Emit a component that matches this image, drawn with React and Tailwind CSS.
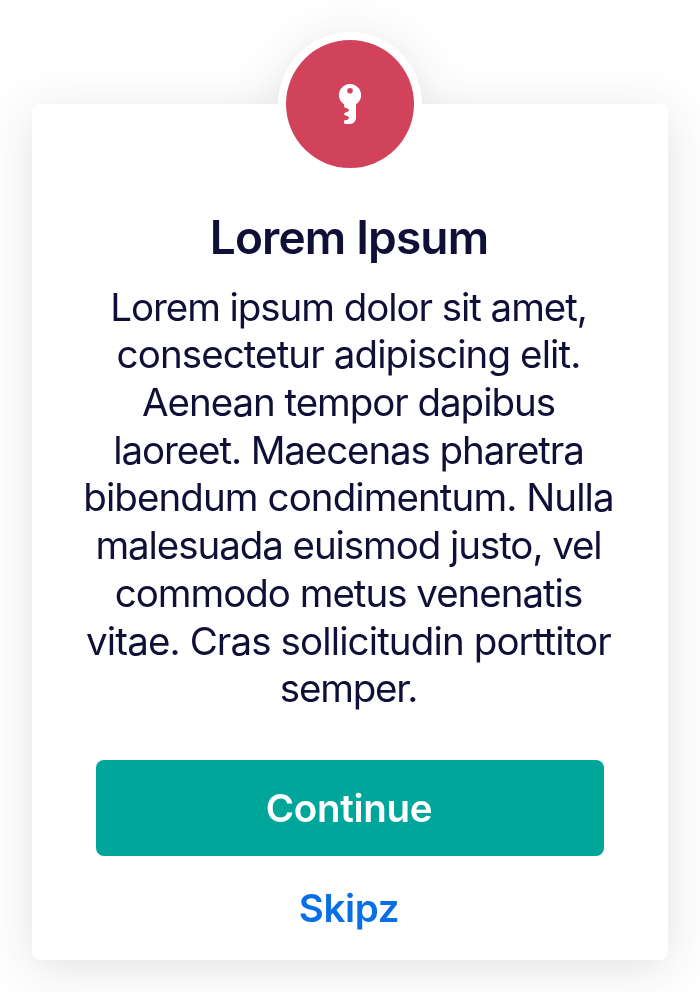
const lines = [
  { text: 'Lorem ipsum dolor sit amet,', tracking: 'tracking-[-1.06px]' },
  { text: 'consectetur adipiscing elit.', tracking: 'tracking-[-0.9px]' },
  { text: 'Aenean tempor dapibus', tracking: 'tracking-[-1.05px]' },
  { text: 'laoreet. Maecenas pharetra', tracking: 'tracking-[-1.1px]' },
  { text: 'bibendum condimentum. Nulla', tracking: 'tracking-[-0.92px]' },
  { text: 'malesuada euismod justo, vel', tracking: 'tracking-[-1.07px]' },
  { text: 'commodo metus venenatis', tracking: 'tracking-[-1.02px]' },
  { text: 'vitae. Cras sollicitudin porttitor', tracking: 'tracking-[-0.88px]' },
  { text: 'semper.', tracking: 'tracking-[-1.2px]' },
];

function KeyIcon() {
  return (
    <svg width="24" height="42" viewBox="0 0 24 42" fill="none">
      <path
        fill="white"
        fillRule="evenodd"
        d="M12 1a11 11 0 0 1 6 20.300V35a6 6 0 0 1-6 6H7.500Q6 41 6 39.500V38.200Q6 37.500 7 37.300L9.500 36.700Q11 36 11 34.800Q11 33.700 9.500 33.300L7.500 32.500Q6 31.800 6 31Q6 30.200 7.500 29.500L9.500 28.700Q11 28.200 11 27Q11 26 9.500 25.500L7.300 24.800Q6 24.200 6 23V21.300A11 11 0 0 1 12 1ZM12 5a2.800 2.800 0 1 0 0 5.600a2.800 2.800 0 0 0 0-5.600Z"
      />
    </svg>
  );
}

export default function App() {
  return (
    <main className="h-[992px] w-[700px] overflow-hidden bg-white px-8 pt-[104px] font-['Inter',sans-serif] text-[#100f37]">
      <section className="flex h-[856px] flex-col items-center rounded-lg bg-white [filter:drop-shadow(0_8px_24px_rgba(20,20,43,0.13))]">
        <div className="-mt-[72px] flex size-36 shrink-0 items-center justify-center rounded-full bg-white">
          <div className="flex size-32 items-center justify-center rounded-full bg-[#d0435b]">
            <KeyIcon />
          </div>
        </div>
        <h1 className="mt-[33px] pr-0.5 text-[46px] leading-[56px] font-semibold tracking-[-0.85px] whitespace-nowrap">Lorem Ipsum</h1>
        <div className="mt-[18.6px] pr-[3px] text-center text-[38.5px] leading-[47.7px] whitespace-nowrap">
          {lines.map(({ text, tracking }) => (
            <p key={text} className={tracking}>{text}</p>
          ))}
        </div>
        <button className="mt-[47.100px] h-24 w-[508px] shrink-0 rounded-lg bg-[#00a699] pt-0.5 pr-0.5 text-[38.5px] font-semibold tracking-[-0.3px] text-white">Continue</button>
        <button className="mt-[28px] pr-0.5 text-[38.5px] leading-[48px] font-semibold tracking-[-0.3px] text-[#0870e6]">Skipz</button>
      </section>
    </main>
  );
}
